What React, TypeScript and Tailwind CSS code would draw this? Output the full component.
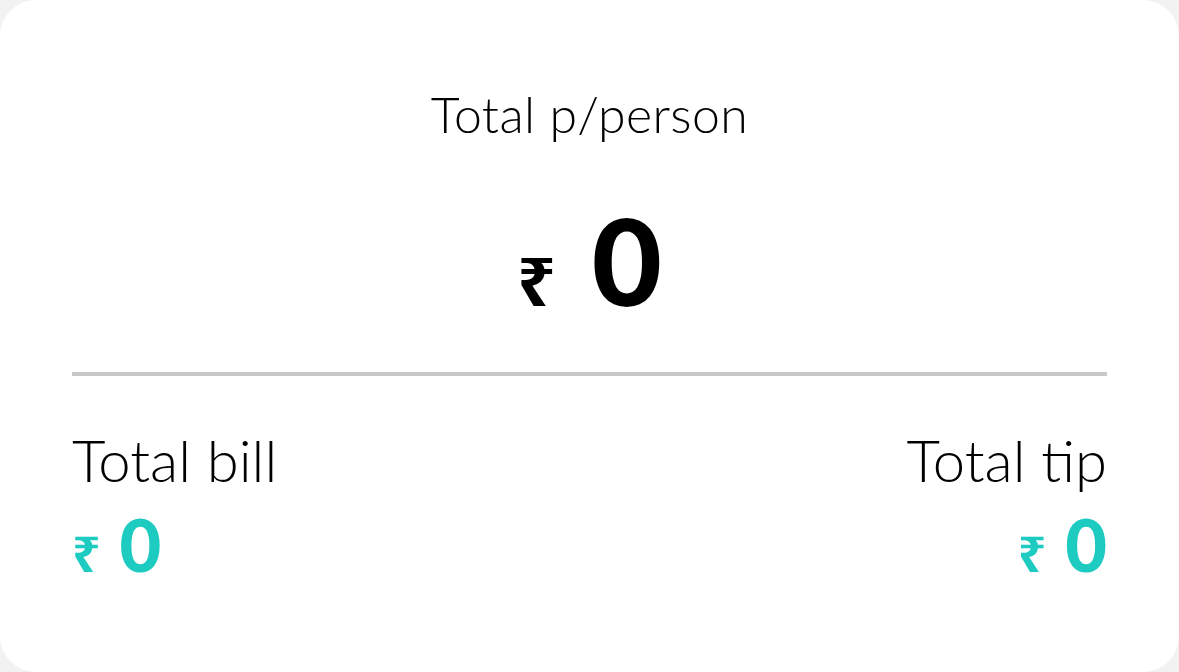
import React from "react";

export default function App() {
  return (
    <div className="w-[1179px] h-[672px] bg-[#f2f2f2]" style={{ fontFamily: "Lato, 'Noto Sans', sans-serif" }}>
      <div className="w-full h-full bg-white rounded-[36px] px-[72px] pt-[84px] flex flex-col">
        <div className="text-center text-[50px] font-light leading-[60px] tracking-[0.4px] text-black">Total p/person</div>
        <div className="flex justify-center items-baseline mt-[55px] h-[114px]">
          <span className="text-[68px] font-bold leading-none mr-[36px] text-black" style={{ fontFamily: "'Noto Sans', sans-serif" }}>₹</span>
          <span className="text-[121px] font-black leading-none text-black">0</span>
        </div>
        <div className="h-[4px] bg-[#c8c8c8] mt-[59px]" />
        <div className="flex justify-between mt-[52px]">
          <div className="flex flex-col items-start">
            <div className="text-[58px] font-light leading-[64px] text-black">Total bill</div>
            <div className="flex items-baseline mt-[16px]">
              <span className="text-[50px] font-bold leading-none mr-[19px] text-[#1ecbc0]" style={{ fontFamily: "'Noto Sans', sans-serif" }}>₹</span>
              <span className="text-[72px] font-black leading-none text-[#1ecbc0]">0</span>
            </div>
          </div>
          <div className="flex flex-col items-end">
            <div className="text-[58px] font-light leading-[64px] text-black">Total tip</div>
            <div className="flex items-baseline mt-[16px]">
              <span className="text-[50px] font-bold leading-none mr-[19px] text-[#1ecbc0]" style={{ fontFamily: "'Noto Sans', sans-serif" }}>₹</span>
              <span className="text-[72px] font-black leading-none text-[#1ecbc0]">0</span>
            </div>
          </div>
        </div>
      </div>
    </div>
  );
}
